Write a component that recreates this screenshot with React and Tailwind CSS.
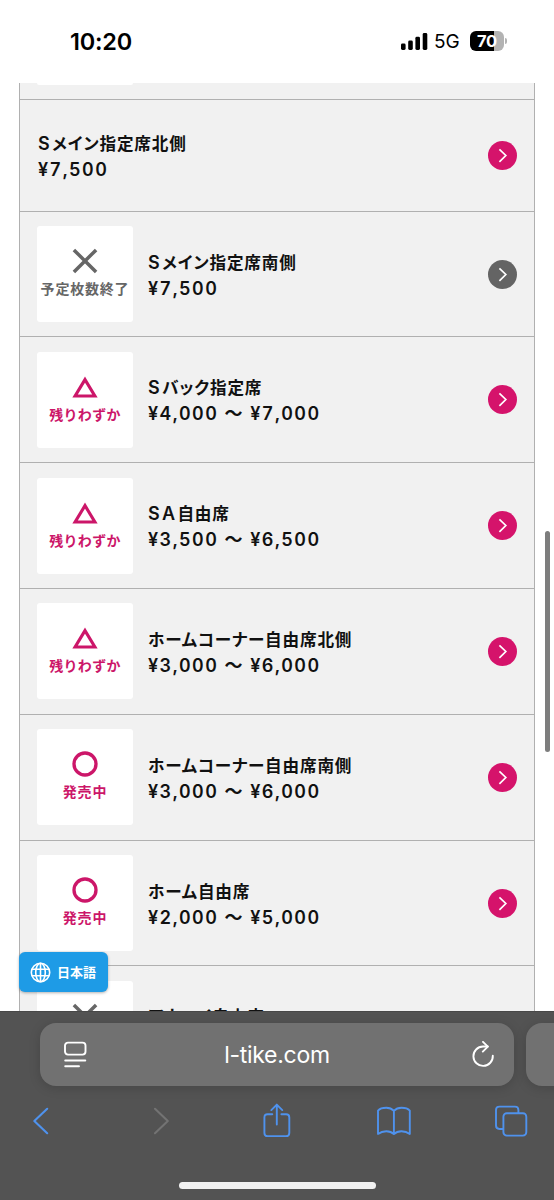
// Seat list
const seats = [
  { id: 1, name: 'Sメイン指定席北側', price: '¥7,500', status: null },
  { id: 2, name: 'Sメイン指定席南側', price: '¥7,500', status: 'soldout' },
  { id: 3, name: 'Sバック指定席', price: '¥4,000 〜 ¥7,000', status: 'few' },
  { id: 4, name: 'SA自由席', price: '¥3,500 〜 ¥6,500', status: 'few' },
  { id: 5, name: 'ホームコーナー自由席北側', price: '¥3,000 〜 ¥6,000', status: 'few' },
  { id: 6, name: 'ホームコーナー自由席南側', price: '¥3,000 〜 ¥6,000', status: 'onsale' },
  { id: 7, name: 'ホーム自由席', price: '¥2,000 〜 ¥5,000', status: 'onsale' },
  { id: 8, name: 'アウェイ自由席', price: null, status: 'soldout' }
];

const statusLabels = {
  soldout: '予定枚数終了',
  few: '残りわずか',
  onsale: '発売中'
};

const StatusMark = ({ status }) => (
  <svg className="w-[26px] h-[26px]" viewBox="0 0 26 26" fill="none" stroke="currentColor">
    {status === 'soldout' && <path d="M1.9 1.9 24.1 24.1M24.1 1.9 1.9 24.1" strokeWidth="3.5" />}
    {status === 'few' && <path d="M13 5.6 22.9 22H3.1Z" strokeWidth="3.1" />}
    {status === 'onsale' && <circle cx="13" cy="13" r="11" strokeWidth="3.3" />}
  </svg>
);

const StatusBox = ({ status }) => (
  <div
    className={`w-24 h-24 mr-[15px] shrink-0 rounded-[3px] bg-white flex flex-col items-center pt-[22px] ${
      status === 'soldout' ? 'text-[#666666]' : 'text-[#cc1669]'
    }`}
  >
    <StatusMark status={status} />
    <span
      className={`mt-[5px] text-[14px] leading-5 font-bold whitespace-nowrap ${
        status === 'few' ? 'tracking-[0.3px]' : 'tracking-[0.8px]'
      }`}
    >
      {statusLabels[status]}
    </span>
  </div>
);

// A leading Latin block is set a little wider than the Japanese text after it
const SeatName = ({ name }) => {
  const latin = name.match(/^[A-Z]*/)[0];
  return (
    <p className="text-[16.6px] font-bold tracking-[0.85px] [font-feature-settings:'palt']">
      {latin && <span className="text-[18px] leading-none font-semibold tracking-[2.4px]">{latin}</span>}
      {name.slice(latin.length)}
    </p>
  );
};

const SeatRow = ({ seat }) => (
  <li
    className={`flex items-center shrink-0 border-t border-[#b0b0b0] pl-[17px] pr-[17px] ${
      seat.status ? 'h-[125.8px]' : 'h-[111.7px]'
    }`}
  >
    {seat.status && <StatusBox status={seat.status} />}
    <div className={`grow pt-[3px] leading-[25px] text-[#111111] whitespace-nowrap ${seat.status ? '' : 'pl-px'}`}>
      <SeatName name={seat.name} />
      <p className="h-[25px] text-[18px] font-semibold tabular-nums tracking-[1.45px]">{seat.price}</p>
    </div>
    <span
      className={`w-[29px] h-[29px] shrink-0 rounded-full flex items-center justify-center ${
        seat.status === 'soldout' ? 'bg-[#646464]' : 'bg-[#d5136b]'
      }`}
    >
      <svg className="w-[29px] h-[29px]" viewBox="0 0 29 29" fill="none" stroke="white" strokeWidth="1.7">
        <path d="M11.4 8.4 17.8 14.5 11.4 20.8" />
      </svg>
    </span>
  </li>
);

const StatusBar = () => (
  <header className="h-[83px] shrink-0 flex items-start justify-between pl-[70px] pr-[47px] pt-7 text-black">
    <span className="text-[23.5px] leading-7 font-semibold tracking-[-0.2px]">10:20</span>
    <div className="flex items-center h-7 -mt-px">
      <svg className="w-[27px] h-[19px] -translate-x-[2px]" viewBox="0 0 27 19" fill="currentColor">
        <rect x="0" y="11.5" width="4.6" height="6.5" rx="1.4" />
        <rect x="7.2" y="8.5" width="4.6" height="9.5" rx="1.4" />
        <rect x="14.4" y="4.8" width="4.6" height="13.2" rx="1.4" />
        <rect x="21.7" y="1" width="4.6" height="17" rx="1.4" />
      </svg>
      <span className="ml-1 w-[37px] pt-px text-[19px] leading-7 font-normal">5G</span>
      <div className="-ml-px w-[34px] h-5 rounded-[6px] bg-linear-to-r from-black from-71% to-[#b3b3b3] to-71% text-center text-[16.5px] leading-5 font-bold tracking-[-0.3px] text-white">
        70
      </div>
      <span className="ml-[1px] w-[2px] h-[6px] rounded-r-full bg-[#b3b3b3]" />
    </div>
  </header>
);

const BrowserBar = () => (
  <footer className="h-[189px] shrink-0 bg-[#535353] border-t border-[#484848] flex flex-col overflow-hidden">
    <div className="mt-[11px] ml-10 flex gap-3">
      <div className="w-[474px] h-[63px] shrink-0 rounded-[16px] bg-[#717171] shadow-[0_2px_12px_rgba(0,0,0,0.16)] flex items-center justify-between pl-6 pr-[19px] text-white">
        <svg className="w-[23px] h-[27px]" viewBox="0 0 23 27" fill="none" stroke="currentColor" strokeWidth="1.9" strokeLinecap="round">
          <rect x="1" y="1.6" width="20.5" height="12" rx="3" />
          <path d="M1.2 19.5H21.3M1.2 25.3H15" />
        </svg>
        <span className="-translate-x-[2px] text-[23px] leading-8 font-normal tracking-[-0.3px]">l-tike.com</span>
        <svg className="w-[24px] h-[28px]" viewBox="0 0 24 28" fill="none" stroke="currentColor" strokeWidth="1.9" strokeLinecap="round" strokeLinejoin="round">
          <path d="M21.8 14.7A9.7 9.7 0 1 1 12 5.5H16.8" />
          <path d="M12 0.9 16.8 5.6 11.8 10.6" />
        </svg>
      </div>
      <div className="w-[474px] h-[63px] shrink-0 rounded-[16px] bg-[#717171] shadow-[0_2px_12px_rgba(0,0,0,0.16)]" />
    </div>
    <nav className="mt-[17px] pl-[22px] pr-[25px] flex justify-between text-[#4f92ed]">
      <svg className="w-9 h-9" viewBox="0 0 36 36" fill="none" stroke="currentColor" strokeWidth="2.1" strokeLinecap="round" strokeLinejoin="round">
        <path d="M25.2 5.8 12.3 18 25.2 30.2" />
      </svg>
      <svg className="w-9 h-9 text-[#737373]" viewBox="0 0 36 36" fill="none" stroke="currentColor" strokeWidth="2.1" strokeLinecap="round" strokeLinejoin="round">
        <path d="M15 5.8 27.8 18 15 30.2" />
      </svg>
      <svg className="w-9 h-9" viewBox="0 0 36 36" fill="none" stroke="currentColor" strokeWidth="1.9" strokeLinecap="round" strokeLinejoin="round">
        <path d="M14.3 11.2H9.6Q6.4 11.2 6.4 14.4V29.9Q6.4 33.1 9.6 33.1H28.1Q31.3 33.1 31.3 29.9V14.4Q31.3 11.2 28.1 11.2H23.4" />
        <path d="M18.8 21.6V1.9M13.3 7.1 18.8 1.6 24.3 7.1" />
      </svg>
      <svg className="w-9 h-9" viewBox="0 0 36 36" fill="none" stroke="currentColor" strokeWidth="1.9" strokeLinejoin="round">
        <path d="M18.9 7.9C17 5.9 14.4 4.8 11.3 4.8C8 4.8 4.6 5.8 3 7.6V30.9C5.2 29.2 8 28.2 11.3 28.2C14.4 28.2 17 29.2 18.9 31.1C20.8 29.2 23.4 28.2 26.5 28.2C29.8 28.2 32.6 29.2 34.8 30.9V7.6C33.2 5.8 29.8 4.8 26.5 4.8C23.4 4.8 20.8 5.9 18.9 7.9ZM18.9 7.9V31.1" />
      </svg>
      <svg className="w-9 h-9" viewBox="0 0 36 36" fill="none" stroke="currentColor" strokeWidth="1.9" strokeLinejoin="round">
        <rect x="10.4" y="10.3" width="22.9" height="22.3" rx="3.4" />
        <path d="M10 26H6.4Q3 26 3 22.6V7Q3 3.6 6.4 3.6H22Q25.4 3.6 25.4 7V10" />
      </svg>
    </nav>
    <div className="mt-[43px] ml-[179px] w-[197px] h-[7px] shrink-0 rounded-full bg-[#f1f1f1]" />
  </footer>
);

const App = () => {
  return (
    <div className="relative w-[554px] h-[1200px] flex flex-col overflow-hidden bg-white font-[Inter,'Noto_Sans_CJK_JP',sans-serif]">
      <StatusBar />
      <main className="h-[928px] shrink-0 overflow-hidden pl-[19px] pr-[19px]">
        <ul className="flex flex-col border-x border-[#b0b0b0] bg-[#f1f1f1]">
          <li className="h-4 shrink-0 pl-[17px]">
            <div className="w-24 h-[2px] rounded-b-[3px] bg-white" />
          </li>
          {seats.map((seat) => (
            <SeatRow key={seat.id} seat={seat} />
          ))}
        </ul>
      </main>
      <BrowserBar />

      {/* Language switcher */}
      <button className="absolute left-[19px] top-[952px] w-[89px] h-10 rounded-[6px] bg-[#1e9be6] shadow-[0_1px_3px_rgba(0,0,0,0.3)] flex items-center pl-[11px] text-white">
        <svg className="w-[21px] h-[21px]" viewBox="0 0 21 21" fill="none" stroke="currentColor" strokeWidth="1.6">
          <circle cx="10.5" cy="10.5" r="9.2" />
          <ellipse cx="10.5" cy="10.5" rx="4.8" ry="9.2" />
          <path d="M10.5 1.3V19.7M2 7.2H19M2 13.8H19" />
        </svg>
        <span className="ml-[6px] pt-px text-[13px] font-bold whitespace-nowrap">日本語</span>
      </button>

      {/* Scroll indicator */}
      <div className="absolute left-[545px] top-[531px] w-[5px] h-[221px] rounded-full bg-[#7d7d7d]" />
    </div>
  );
};

export default App;
